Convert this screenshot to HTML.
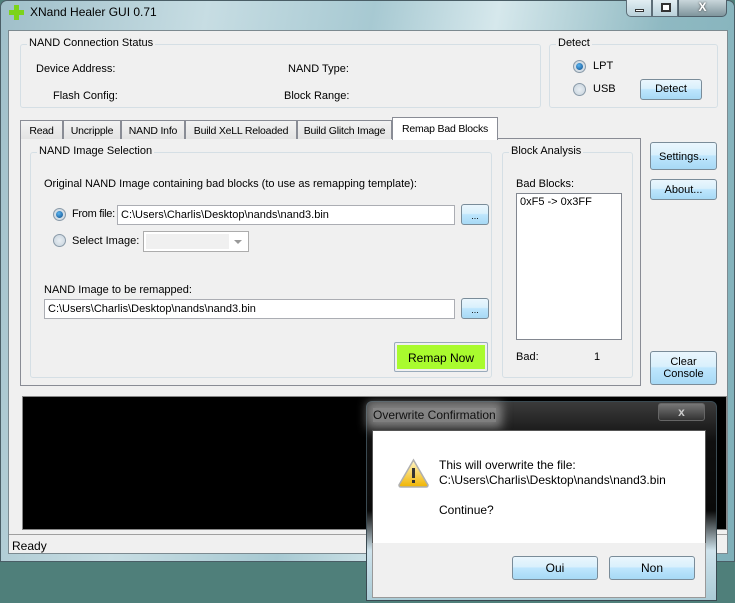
<!DOCTYPE html>
<html><head><meta charset="utf-8"><style>
*{box-sizing:border-box;margin:0;padding:0}
body{width:735px;height:603px;overflow:hidden;position:relative;font-family:"Liberation Sans",sans-serif;font-size:11px;color:#000;background:#4f7f7a}
.a{position:absolute;white-space:nowrap}
.frame{left:0;top:0;width:735px;height:562px;border-radius:7px 7px 0 0;background:linear-gradient(100deg,#9fbfc9 0%,#c7dde3 25%,#a7c9d2 45%,#d6e8ec 60%,#8fb9c2 80%,#7fb0b9 100%);border:1px solid #4a5e66}
.client{left:8px;top:30px;width:720px;height:524px;background:#f0f0f0;border:1px solid #7c8a90}
.grp{position:absolute;border:1px solid #d5dfe5;border-radius:3px}
.grp>span{position:absolute;top:-8px;left:6px;background:#f0f0f0;padding:0 2px;white-space:nowrap}
.btn{position:absolute;border:1px solid #7a8c99;border-radius:3px;background:linear-gradient(#eaf6fd 0%,#d9f0fc 45%,#bee6fd 50%,#a7d9f5 100%);text-align:center;white-space:nowrap}
.tab{position:absolute;top:120px;height:19px;border:1px solid #898c95;border-bottom:none;background:linear-gradient(#f2f2f2,#e3e3e3);padding:4px 0 0 0;text-align:center;white-space:nowrap;font-size:10.5px;letter-spacing:-0.2px;overflow:hidden}
.tb{position:absolute;background:#fff;border:1px solid #abadb3;padding:3px 0 0 3px;height:20px;white-space:nowrap}
.rad{position:absolute;width:13px;height:13px;border-radius:50%;border:1px solid #8a9aa8;background:radial-gradient(#e8eef3,#c6d2dc)}
.rad.on::after{content:"";position:absolute;left:2px;top:2px;width:7px;height:7px;border-radius:50%;background:radial-gradient(circle at 40% 35%,#5ab4f0,#0c4c8a)}
</style></head><body>
<div class="a frame"></div>
<div class="a" style="left:9px;top:5px;width:14px;height:14px">
 <div class="a" style="left:5px;top:0;width:5px;height:15px;background:#7cd31a"></div>
 <div class="a" style="left:0;top:5px;width:15px;height:5px;background:#7cd31a"></div>
</div>
<div class="a" style="left:30px;top:5px;font-size:12px">XNand Healer GUI 0.71</div>
<div class="a" style="left:626px;top:0;width:26px;height:17px;border:1px solid #5d6e78;border-top:none;border-radius:0 0 0 5px;background:linear-gradient(#e2eef3,#b9d1da)"><div class="a" style="left:8px;top:9px;width:9px;height:3px;border:1px solid #333;background:#fff"></div></div>
<div class="a" style="left:652px;top:0;width:26px;height:17px;border:1px solid #5d6e78;border-top:none;background:linear-gradient(#e2eef3,#b9d1da)"><div class="a" style="left:8px;top:3px;width:10px;height:9px;border:2px solid #333;background:#fff"></div></div>
<div class="a" style="left:678px;top:0;width:49px;height:17px;border:1px solid #4d5e68;border-top:none;border-radius:0 0 5px 0;background:linear-gradient(#c9d6db,#7f959c);color:#fff;font-weight:bold;text-align:center;font-size:12px;line-height:15px;text-shadow:0 0 2px #333">X</div>

<div class="a client"></div>
<div class="grp" style="left:20px;top:44px;width:521px;height:64px"><span>NAND Connection Status</span></div>
<div class="a" style="left:36px;top:63px">Device Address:</div>
<div class="a" style="left:53px;top:90px">Flash Config:</div>
<div class="a" style="left:288px;top:63px">NAND Type:</div>
<div class="a" style="left:284px;top:90px">Block Range:</div>
<div class="grp" style="left:549px;top:44px;width:169px;height:64px"><span>Detect</span></div>
<div class="rad on" style="left:573px;top:60px"></div><div class="a" style="left:593px;top:60px">LPT</div>
<div class="rad" style="left:573px;top:83px"></div><div class="a" style="left:593px;top:83px">USB</div>
<div class="btn" style="left:640px;top:79px;width:62px;height:21px;padding-top:3px">Detect</div>

<div class="a" style="left:20px;top:138px;width:621px;height:248px;background:#fff;border:1px solid #898c95"></div>
<div class="a" style="left:21px;top:139px;width:619px;height:246px;background:#f0f0f0"></div>
<div class="tab" style="left:20px;width:43px">Read</div>
<div class="tab" style="left:63px;width:58px">Uncripple</div>
<div class="tab" style="left:121px;width:64px">NAND Info</div>
<div class="tab" style="left:185px;width:112px">Build XeLL Reloaded</div>
<div class="tab" style="left:297px;width:95px">Build Glitch Image</div>
<div class="tab" style="left:392px;top:117px;width:106px;height:23px;background:#fff;padding-top:5px">Remap Bad Blocks</div>

<div class="grp" style="left:30px;top:152px;width:462px;height:226px"><span>NAND Image Selection</span></div>
<div class="a" style="left:44px;top:178px">Original NAND Image containing bad blocks (to use as remapping template):</div>
<div class="rad on" style="left:53px;top:208px"></div><div class="a" style="left:72px;top:208px;letter-spacing:-0.3px">From file:</div>
<div class="tb" style="left:117px;top:205px;width:338px">C:\Users\Charlis\Desktop\nands\nand3.bin</div>
<div class="btn" style="left:461px;top:204px;width:28px;height:21px;font-size:9px;padding-top:6px">...</div>
<div class="rad" style="left:53px;top:234px"></div><div class="a" style="left:72px;top:235px">Select Image:</div>
<div class="a" style="left:143px;top:231px;width:106px;height:21px;border:1px solid #acacac;background:#fff"><div class="a" style="left:2px;top:2px;width:83px;height:15px;background:#f0f0f0"></div><div class="a" style="left:90px;top:8px;border:4px solid transparent;border-top:4px solid #999"></div></div>
<div class="a" style="left:44px;top:284px">NAND Image to be remapped:</div>
<div class="tb" style="left:44px;top:299px;width:411px">C:\Users\Charlis\Desktop\nands\nand3.bin</div>
<div class="btn" style="left:461px;top:298px;width:28px;height:21px;font-size:9px;padding-top:6px">...</div>
<div class="a" style="left:394px;top:342px;width:94px;height:30px;border:1px solid #9ab;border-radius:2px;background:#f0f0f0;padding:2px"><div style="height:24px;background:#a9fb2e;text-align:center;padding-top:6px;font-size:12px">Remap Now</div></div>

<div class="grp" style="left:502px;top:152px;width:131px;height:226px"><span>Block Analysis</span></div>
<div class="a" style="left:516px;top:178px">Bad Blocks:</div>
<div class="a" style="left:516px;top:193px;width:106px;height:147px;background:#fff;border:1px solid #828790;padding:2px 3px">0xF5 -&gt; 0x3FF</div>
<div class="a" style="left:516px;top:351px">Bad:</div>
<div class="a" style="left:594px;top:351px">1</div>

<div class="btn" style="left:650px;top:142px;width:67px;height:28px;padding-top:8px">Settings...</div>
<div class="btn" style="left:650px;top:179px;width:67px;height:21px;padding-top:4px">About...</div>
<div class="btn" style="left:650px;top:351px;width:67px;height:34px;padding-top:4px;line-height:12px">Clear<br>Console</div>

<div class="a" style="left:22px;top:396px;width:705px;height:134px;background:#000;border:1px solid #888"></div>
<div class="a" style="left:9px;top:534px;width:718px;height:1px;background:#a0a0a0"></div>
<div class="a" style="left:12px;top:539px;font-size:12px">Ready</div>

<div class="a" style="left:366px;top:401px;width:351px;height:200px;border:1px solid #3a4a52;border-radius:6px 6px 0 0;background:linear-gradient(#3b3b3b 0%,#101010 20%,#0a0a0a 55%,#cfe3ec 75%,#aacbd6 100%)"></div>
<div class="a" style="left:373px;top:408px;font-size:12px;color:#111;background:rgba(200,200,200,.55);box-shadow:0 0 10px 6px rgba(200,200,200,.55)">Overwrite Confirmation</div>
<div class="a" style="left:658px;top:403px;width:47px;height:18px;border:1px solid #666;border-radius:3px;background:linear-gradient(#777,#333);color:#ccc;text-align:center;font-weight:bold;font-size:12px;line-height:16px">x</div>
<div class="a" style="left:372px;top:430px;width:334px;height:114px;background:#fff;border:1px solid #555;border-bottom:none"></div>
<div class="a" style="left:372px;top:543px;width:334px;height:55px;background:#f0f0f0;border:1px solid #999;border-top:none"></div>
<svg class="a" style="left:397px;top:458px" width="33" height="31" viewBox="0 0 33 31"><defs><linearGradient id="w" x1="0" y1="0" x2="0" y2="1"><stop offset="0" stop-color="#fff6c8"/><stop offset="1" stop-color="#f0b400"/></linearGradient></defs><path d="M16.5 2 L31 27 Q31 29 29 29 L4 29 Q2 29 2 27 Z" fill="url(#w)" stroke="#b0b0b0" stroke-width="1.5"/><rect x="15" y="10" width="3" height="10" fill="#333"/><rect x="15" y="22" width="3" height="3" fill="#333"/></svg>
<div class="a" style="left:439px;top:458px;font-size:12px;line-height:15px">This will overwrite the file:<br>C:\Users\Charlis\Desktop\nands\nand3.bin</div>
<div class="a" style="left:439px;top:503px;font-size:12px">Continue?</div>
<div class="btn" style="left:512px;top:556px;width:86px;height:24px;padding-top:4px;font-size:12px">Oui</div>
<div class="btn" style="left:609px;top:556px;width:86px;height:24px;padding-top:4px;font-size:12px">Non</div>
</body></html>
